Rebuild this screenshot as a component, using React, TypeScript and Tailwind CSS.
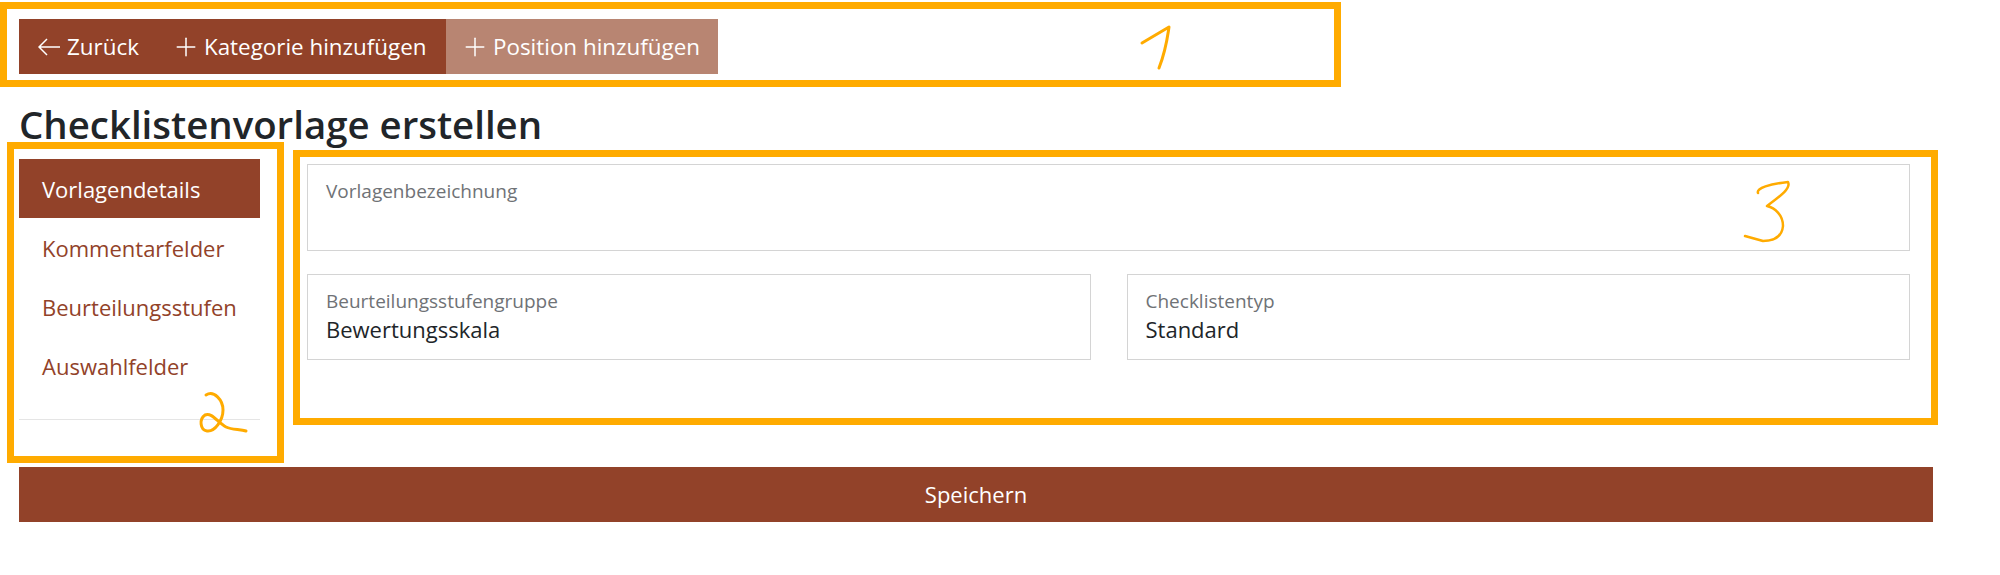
import { Plus } from 'lucide-react';

const font = { fontFamily: '"Open Sans", sans-serif' };

const tabs = ['Vorlagendetails', 'Kommentarfelder', 'Beurteilungsstufen', 'Auswahlfelder'];

const Frame = ({ className }: { className: string }) => (
  <div className={`pointer-events-none absolute border-[7px] border-[#ffab00] ${className}`} />
);

const Field = ({ label, value, className }: { label: string; value?: string; className: string }) => (
  <div className={`border border-[#d4d4d4] px-[18px] pt-[12px] ${className}`}>
    <div className="text-[19px] leading-[28px] text-[#6f7276]">{label}</div>
    {value && <div className="text-[22px] leading-[29px] text-[#212529]">{value}</div>}
  </div>
);

export default function App() {
  return (
    <div className="h-[575px] w-[2000px] overflow-hidden bg-white pl-[19px] pr-[67px] pt-[19px]" style={font}>
      <div className="relative flex h-[55px] text-[22.4px] text-white">
        <Frame className="-left-[19px] -top-[17px] h-[85px] w-[1341px]" />
        <div className="flex w-[427px] items-center bg-[#924229] pl-[19px]">
          <svg width="22" height="18" viewBox="0 0 22 18" fill="none" stroke="currentColor" strokeWidth="1.5" className="mr-[7px]">
            <path d="M22 9H1M9 1L1 9l8 8" />
          </svg>
          Zurück
          <Plus size={30} strokeWidth={1.2} className="ml-[32px] mr-[3px]" />
          Kategorie hinzufügen
        </div>
        <div className="flex w-[272px] items-center bg-[#b88572] pl-[14px]">
          <Plus size={30} strokeWidth={1.2} className="mr-[3px]" />
          Position hinzufügen
        </div>
        <svg className="absolute left-[1101px] -top-[4px]" width="80" height="70" viewBox="0 0 80 70" fill="none">
          <path d="M22 28L49 12C47 25 46 35 39 53" stroke="#ffab00" strokeWidth="3" strokeLinecap="round" strokeLinejoin="round" />
        </svg>
      </div>

      <h1 className="mt-[24px] text-[38.4px] font-semibold leading-[52px] text-[#212529]">Checklistenvorlage erstellen</h1>

      <div className="mt-[9px] flex">
        <div className="relative w-[241px] shrink-0">
          <Frame className="-left-[12px] -top-[17px] h-[321px] w-[277px]" />
          {tabs.map((tab, i) => (
            <div
              key={tab}
              className={`flex h-[59px] items-center px-[23px] pt-[2px] text-[22px] ${i === 0 ? 'bg-[#924229] text-white' : 'text-[#924229]'}`}
            >
              {tab}
            </div>
          ))}
          <div className="mt-[24px] border-t border-[#e5e5e5]" />
          <svg className="absolute left-[171px] top-[226px]" width="70" height="60" viewBox="0 0 70 60" fill="none">
            <path d="M16 10C24 5 33 15 33 25C33 35 25 47 17 46C10 45 9 34 15 30C22 27 28 38 36 42C42 45 50 44 56 46" stroke="#ffab00" strokeWidth="3" strokeLinecap="round" />
          </svg>
        </div>

        <div className="relative ml-[47px] mr-[23px] flex-1 pt-[5px]">
          <Frame className="-left-[14px] -top-[9px] h-[275px] w-[1645px]" />
          <Field label="Vorlagenbezeichnung" className="h-[87px]" />
          <div className="mt-[23px] flex gap-[36px]">
            <Field label="Beurteilungsstufengruppe" value="Bewertungsskala" className="h-[86px] flex-1" />
            <Field label="Checklistentyp" value="Standard" className="h-[86px] flex-1" />
          </div>
          <svg className="absolute left-[1423px] top-[11px]" width="80" height="80" viewBox="0 0 80 80" fill="none">
            <path d="M28 23C26 18 40 14 58 12C61 18 52 25 37 36C45 38 53 45 53 56C52 66 45 71 33 71L15 66" stroke="#ffab00" strokeWidth="2.5" strokeLinecap="round" strokeLinejoin="round" />
          </svg>
        </div>
      </div>

      <div className="mt-[47px] flex h-[55px] items-center justify-center bg-[#924229] text-[22px] text-white">Speichern</div>
    </div>
  );
}
